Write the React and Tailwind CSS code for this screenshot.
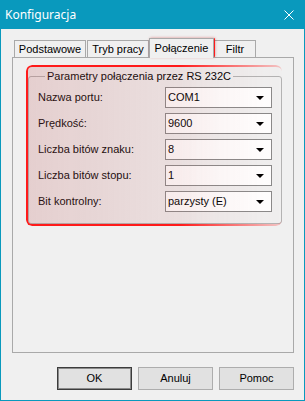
import React from "react";

const rows = [
  ["Nazwa portu:", "COM1"],
  ["Prędkość:", "9600"],
  ["Liczba bitów znaku:", "8"],
  ["Liczba bitów stopu:", "1"],
  ["Bit kontrolny:", "parzysty (E)"],
];

function Combo({ value }) {
  return (
    <div className="w-[107px] h-[21px] border border-[#8a8a8a] bg-white flex items-center justify-between pl-[2px] pr-[7px]">
      <span className="leading-[13px]">{value}</span>
      <svg width="8" height="4" viewBox="0 0 8 4">
        <path d="M0 0H8L4 4Z" fill="#000" />
      </svg>
    </div>
  );
}

function Tab({ children, w }) {
  return (
    <div
      className={`${w} h-[17px] border border-b-0 border-[#a9a9a9] bg-[#f0f0f0] flex items-center justify-center leading-[13px]`}
    >
      {children}
    </div>
  );
}

export default function App() {
  return (
    <div className="w-[305px] h-[401px] bg-[#0999bd] flex flex-col font-['Liberation_Sans',Arial,sans-serif] text-[11px] text-black">
      <div className="h-[29px] shrink-0 flex items-center justify-between pl-[5px] pr-[11px]">
        <span className="font-['Noto_Sans',sans-serif] text-[12px] text-white leading-[16px]">
          Konfiguracja
        </span>
        <svg width="10" height="10" viewBox="0 0 10 10">
          <path d="M0.5 0.5L9.5 9.5M9.5 0.5L0.5 9.5" stroke="#fff" strokeWidth="1" />
        </svg>
      </div>
      <div className="flex-1 mx-[1px] mb-[1px] bg-[#f0f0f0] relative flex flex-col">
        <div className="flex items-end pl-[13px] pt-[9px]">
          <Tab w="w-[72px]">Podstawowe</Tab>
          <div className="w-[1px]" />
          <Tab w="w-[62px]">Tryb pracy</Tab>
          <div className="w-[65px] h-[20px] border border-b-0 border-[#a9a9a9] bg-[#f0f0f0] flex items-center justify-center leading-[13px] relative z-10 -mb-[1px]">
            Połączenie
          </div>
          <Tab w="w-[42px]">Filtr</Tab>
        </div>
        <div className="ml-[11px] w-[282px] h-[296px] border border-[#a9a9a9] relative">
          <fieldset className="ml-[15px] mt-[12px] w-[254px] border border-[#b4b4b4] rounded-[3px] pl-[9px] pr-[9px] pt-[4px] pb-[11px]">
            <legend className="ml-[7px] px-[2px] leading-[13px]">
              Parametry połączenia przez RS 232C
            </legend>
            <div className="flex flex-col gap-[5px]">
              {rows.map(([label, value]) => (
                <div key={label} className="flex items-center justify-between h-[21px]">
                  <span className="leading-[13px]">{label}</span>
                  <Combo value={value} />
                </div>
              ))}
            </div>
          </fieldset>
          <div className="absolute left-[13px] top-[7px] w-[256px] h-[161px] rounded-[6px] border-2 border-r-0 border-[#ff1a1a] bg-linear-to-r from-[rgba(190,90,90,0.22)] to-[rgba(190,90,90,0.04)] shadow-[0_3px_3px_rgba(0,0,0,0.18)] [mask-image:linear-gradient(to_right,#000_60%,rgba(0,0,0,0.2))]">
            <svg className="absolute left-[-6px] top-[73px]" width="5" height="9" viewBox="0 0 5 9">
              <path d="M5 0L1 4.5L5 9Z" fill="#ff1a1a" />
            </svg>
          </div>
        </div>
        <div className="absolute left-[149px] top-[9px] w-[65px] h-[19px] border-2 border-[#ff1a1a] rounded-[1px] shadow-[0_0_3px_rgba(200,0,0,0.45)]" />
        <div className="flex justify-end gap-[6px] pr-[10px] mt-[14px]">
          <button className="w-[75px] h-[23px] bg-[#e1e1e1] border border-[#3c3c3c] shadow-[inset_0_0_0_1px_#8a8a8a] leading-[13px] font-normal">
            OK
          </button>
          <button className="w-[75px] h-[23px] bg-[#e1e1e1] border border-[#adadad] leading-[13px] font-normal">
            Anuluj
          </button>
          <button className="w-[75px] h-[23px] bg-[#e1e1e1] border border-[#adadad] leading-[13px] font-normal">
            Pomoc
          </button>
        </div>
      </div>
    </div>
  );
}
